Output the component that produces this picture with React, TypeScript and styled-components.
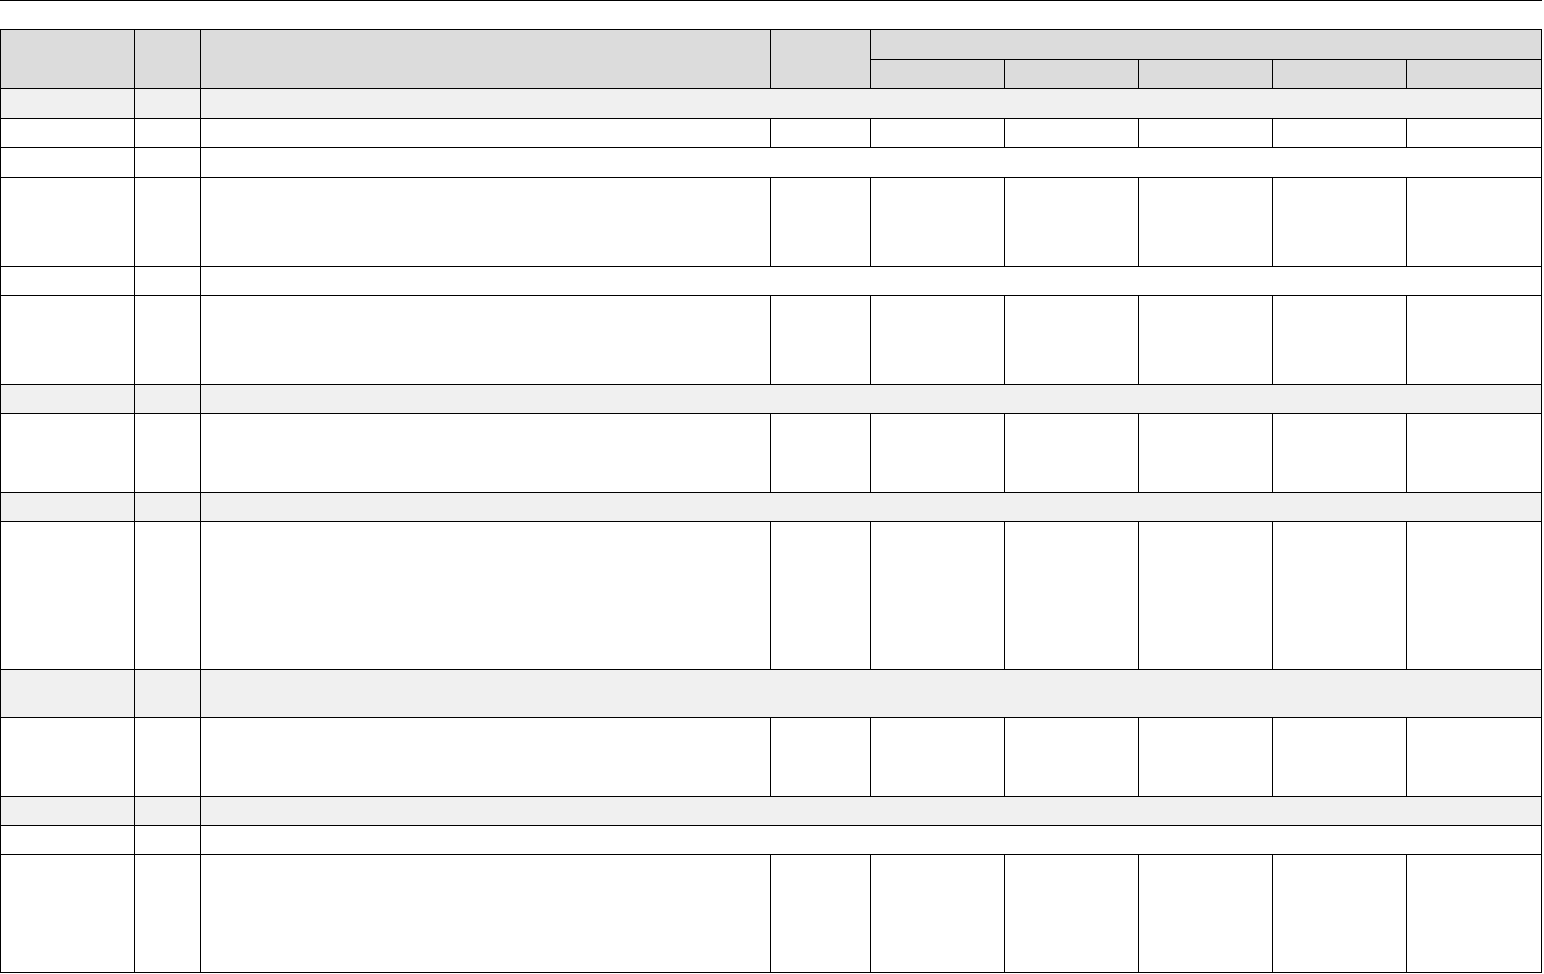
import React from 'react';
import styled, { createGlobalStyle } from 'styled-components';

type RowKind = 'section' | 'note' | 'item';

interface Row {
  kind: RowKind;
  height: number;
}

const GlobalStyle = createGlobalStyle`
  html, body {
    margin: 0;
    padding: 0;
    background: #ffffff;
    font-family: "Liberation Sans", Arial, sans-serif;
    font-size: 13px;
    color: #000000;
  }
`;

const Page = styled.div`
  width: 1542px;
  border-top: 1px solid #000000;
  padding-top: 28px;
`;

const Sheet = styled.table`
  width: 1541px;
  border-collapse: collapse;
  table-layout: fixed;
  border: 1px solid #000000;
`;

const HeadCell = styled.th<{ $h: number }>`
  height: ${p => p.$h}px;
  padding: 0;
  background: #dcdcdc;
  border: 1px solid #000000;
  font-weight: 700;
  box-sizing: border-box;
`;

const Cell = styled.td<{ $h: number; $shaded?: boolean }>`
  height: ${p => p.$h}px;
  padding: 0;
  background: ${p => (p.$shaded ? '#f0f0f0' : '#ffffff')};
  border: 1px solid #000000;
  vertical-align: top;
  box-sizing: border-box;
`;

const colWidths = [134, 66, 570, 100, 134, 134, 134, 134, 135];

const rows: Row[] = [
  { kind: 'section', height: 30 },
  { kind: 'item', height: 29 },
  { kind: 'note', height: 30 },
  { kind: 'item', height: 89 },
  { kind: 'note', height: 29 },
  { kind: 'item', height: 89 },
  { kind: 'section', height: 29 },
  { kind: 'item', height: 79 },
  { kind: 'section', height: 29 },
  { kind: 'item', height: 148 },
  { kind: 'section', height: 48 },
  { kind: 'item', height: 79 },
  { kind: 'section', height: 29 },
  { kind: 'note', height: 29 },
  { kind: 'item', height: 118 },
];

const periods = [0, 1, 2, 3, 4];

export default function App() {
  return (
    <>
      <GlobalStyle />
      <Page>
        <Sheet>
          <colgroup>
            {colWidths.map((w, i) => (
              <col key={i} style={{ width: w }} />
            ))}
          </colgroup>
          <thead>
            <tr>
              <HeadCell $h={30} rowSpan={2} />
              <HeadCell $h={30} rowSpan={2} />
              <HeadCell $h={30} rowSpan={2} />
              <HeadCell $h={30} rowSpan={2} />
              <HeadCell $h={30} colSpan={5} />
            </tr>
            <tr>
              {periods.map(p => (
                <HeadCell key={p} $h={29} />
              ))}
            </tr>
          </thead>
          <tbody>
            {rows.map((r, i) =>
              r.kind === 'item' ? (
                <tr key={i}>
                  {colWidths.map((_, c) => (
                    <Cell key={c} $h={r.height} />
                  ))}
                </tr>
              ) : (
                <tr key={i}>
                  <Cell $h={r.height} $shaded={r.kind === 'section'} />
                  <Cell $h={r.height} $shaded={r.kind === 'section'} />
                  <Cell $h={r.height} $shaded={r.kind === 'section'} colSpan={7} />
                </tr>
              )
            )}
          </tbody>
        </Sheet>
      </Page>
    </>
  );
}
